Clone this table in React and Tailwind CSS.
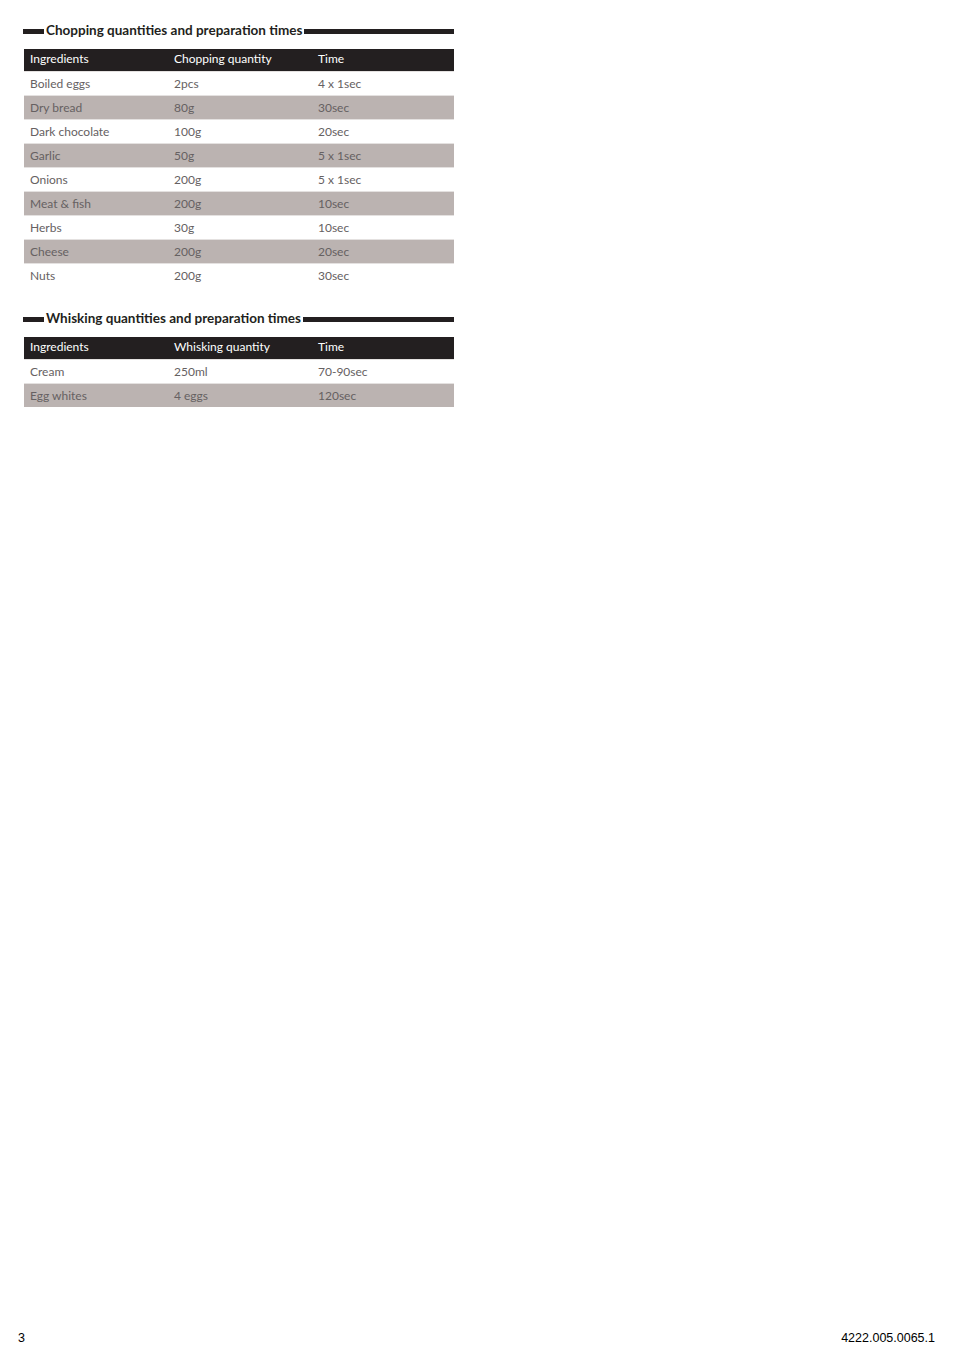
import React from "react";

const chopping = [
  ["Boiled eggs", "2pcs", "4 x 1sec"],
  ["Dry bread", "80g", "30sec"],
  ["Dark chocolate", "100g", "20sec"],
  ["Garlic", "50g", "5 x 1sec"],
  ["Onions", "200g", "5 x 1sec"],
  ["Meat & fish", "200g", "10sec"],
  ["Herbs", "30g", "10sec"],
  ["Cheese", "200g", "20sec"],
  ["Nuts", "200g", "30sec"],
];

const whisking = [
  ["Cream", "250ml", "70-90sec"],
  ["Egg whites", "4 eggs", "120sec"],
];

function Title({ children }) {
  return (
    <div className="flex items-center w-[431px] ml-[23px] h-[14px]">
      <div className="w-[21px] h-[5px] bg-[#231f20] shrink-0" />
      <div className="px-[2px] text-[13.5px] font-bold leading-none text-[#231f20] whitespace-nowrap">
        {children}
      </div>
      <div className="flex-1 h-[5px] bg-[#231f20]" />
    </div>
  );
}

function Table({ head, rows }) {
  return (
    <div className="ml-[24px] w-[430px]">
      <div className="grid grid-cols-[144px_144px_142px] h-[22px] items-center bg-[#231f20] text-white text-[12px] pb-[3px]">
        {head.map((h) => (
          <div key={h} className="pl-[6px]">{h}</div>
        ))}
      </div>
      {rows.map((r, i) => (
        <div
          key={i}
          className={
            "grid grid-cols-[144px_144px_142px] h-[24px] items-center text-[12px] font-normal text-[#666162] border-t border-[#e4e1e0] " +
            (i % 2 === 1 ? "bg-[#bbb3b1]" : "bg-white")
          }
        >
          {r.map((c, j) => (
            <div key={j} className="pl-[6px] pt-[1px]">{c}</div>
          ))}
        </div>
      ))}
    </div>
  );
}

export default function App() {
  return (
    <div
      className="w-[954px] min-h-[1350px] bg-white flex flex-col"
      style={{ fontFamily: "Lato, 'Open Sans', sans-serif" }}
    >
      <div className="pt-[24px]">
        <Title>Chopping quantities and preparation times</Title>
        <div className="h-[11px]" />
        <Table
          head={["Ingredients", "Chopping quantity", "Time"]}
          rows={chopping}
        />
        <div className="h-[25px]" />
        <Title>Whisking quantities and preparation times</Title>
        <div className="h-[11px]" />
        <Table
          head={["Ingredients", "Whisking quantity", "Time"]}
          rows={whisking}
        />
      </div>
      <div
        className="mt-auto flex justify-between items-center pl-[18px] pr-[19px] pb-[2px] text-[12.5px] text-black"
        style={{ fontFamily: "'Liberation Sans', Arial, sans-serif" }}
      >
        <span>3</span>
        <span>4222.005.0065.1</span>
      </div>
    </div>
  );
}
